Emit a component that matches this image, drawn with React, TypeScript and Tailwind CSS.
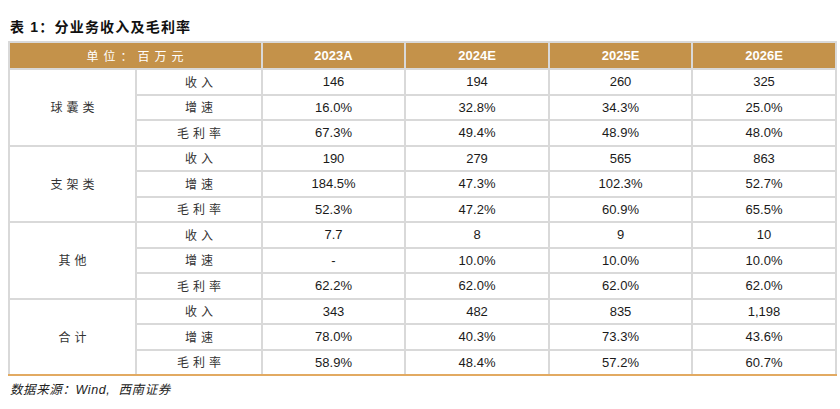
import React from 'react';

type Row = { label: string; values: string[] };
type Group = { name: string; rows: Row[] };

const groups: Group[] = [
  {
    name: '球囊类',
    rows: [
      { label: '收入', values: ['146', '194', '260', '325'] },
      { label: '增速', values: ['16.0%', '32.8%', '34.3%', '25.0%'] },
      { label: '毛利率', values: ['67.3%', '49.4%', '48.9%', '48.0%'] },
    ],
  },
  {
    name: '支架类',
    rows: [
      { label: '收入', values: ['190', '279', '565', '863'] },
      { label: '增速', values: ['184.5%', '47.3%', '102.3%', '52.7%'] },
      { label: '毛利率', values: ['52.3%', '47.2%', '60.9%', '65.5%'] },
    ],
  },
  {
    name: '其他',
    rows: [
      { label: '收入', values: ['7.7', '8', '9', '10'] },
      { label: '增速', values: ['-', '10.0%', '10.0%', '10.0%'] },
      { label: '毛利率', values: ['62.2%', '62.0%', '62.0%', '62.0%'] },
    ],
  },
  {
    name: '合计',
    rows: [
      { label: '收入', values: ['343', '482', '835', '1,198'] },
      { label: '增速', values: ['78.0%', '40.3%', '73.3%', '43.6%'] },
      { label: '毛利率', values: ['58.9%', '48.4%', '57.2%', '60.7%'] },
    ],
  },
];

const years = ['2023A', '2024E', '2025E', '2026E'];

const cjk = "font-['Noto_Sans_CJK_SC',sans-serif]";
const num = "font-['Liberation_Sans','Noto_Sans_CJK_SC',sans-serif]";

export default function App() {
  return (
    <div className="w-[840px] h-[409px] bg-white overflow-hidden">
      <div className={`pt-[17px] pl-[10px] h-[41px] text-[14px] font-bold text-[#111] tracking-[1.2px] ${num}`}>
        表 1：分业务收入及毛利率
      </div>

      <table className="ml-[8px] w-[827px] table-fixed border-collapse">
        <colgroup>
          <col className="w-[127px]" />
          <col className="w-[126px]" />
          <col className="w-[143px]" />
          <col className="w-[144px]" />
          <col className="w-[143px]" />
          <col className="w-[144px]" />
        </colgroup>
        <thead>
          <tr className="h-[27px] bg-[#c4924a]">
            <th
              colSpan={2}
              className={`border-2 border-[#d9d9d9] pl-[4px] text-[12px] font-normal text-white tracking-[5px] ${cjk}`}
            >
              单位：百万元
            </th>
            {years.map(y => (
              <th key={y} className={`border-2 border-[#d9d9d9] text-[13px] font-bold text-white ${num}`}>
                {y}
              </th>
            ))}
          </tr>
        </thead>
        <tbody>
          {groups.map((g, gi) =>
            g.rows.map((r, ri) => {
              const last = gi === groups.length - 1 && ri === 2;
              const bottom = last ? 'border-b-[#e2aa62]' : '';
              return (
                <tr key={g.name + r.label} className="h-[25.5px]">
                  {ri === 0 && (
                    <td
                      rowSpan={3}
                      className={`border-2 border-[#d9d9d9] ${gi === groups.length - 1 ? 'border-b-[#e2aa62]' : ''} pl-[4px] text-center text-[12px] text-[#333] tracking-[4px] ${cjk}`}
                    >
                      {g.name}
                    </td>
                  )}
                  <td className={`border-2 border-[#d9d9d9] ${bottom} pl-[4px] text-center text-[12px] text-[#333] tracking-[4px] ${cjk}`}>
                    {r.label}
                  </td>
                  {r.values.map((v, i) => (
                    <td
                      key={i}
                      className={`border-2 border-[#d9d9d9] ${bottom} text-center text-[13px] text-[#1a1a1a] ${num}`}
                    >
                      {v}
                    </td>
                  ))}
                </tr>
              );
            })
          )}
        </tbody>
      </table>

      <div className={`pl-[10px] pt-[5px] text-[12.5px] italic text-[#222] tracking-[0.6px] ${num}`}>
        数据来源：Wind,&nbsp; 西南证券
      </div>
    </div>
  );
}
